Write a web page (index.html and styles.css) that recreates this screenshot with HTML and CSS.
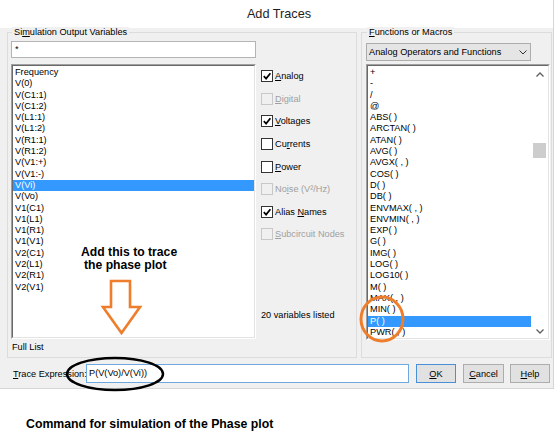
FILE: index.html
```html
<!DOCTYPE html>
<html>
<head>
<meta charset="utf-8">
<title>Add Traces</title>
<link rel="stylesheet" href="styles.css">
</head>
<body>
<div class="page">
  <div class="dialog">
    <div class="titlebar">Add Traces</div>

    <div class="panels">
      <div class="group group-vars">
        <div class="legend">Si<u>m</u>ulation Output Variables</div>
        <div class="group-body vars-body">
          <div class="filter">*</div>
          <div class="vars-row">
            <div class="listbox vars-list">
              <div class="list-inner">
                <div class="item">Frequency</div>
                <div class="item">V(0)</div>
                <div class="item">V(C1:1)</div>
                <div class="item">V(C1:2)</div>
                <div class="item">V(L1:1)</div>
                <div class="item">V(L1:2)</div>
                <div class="item">V(R1:1)</div>
                <div class="item">V(R1:2)</div>
                <div class="item">V(V1:+)</div>
                <div class="item">V(V1:-)</div>
                <div class="item selected">V(Vi)</div>
                <div class="item">V(Vo)</div>
                <div class="item">V1(C1)</div>
                <div class="item">V1(L1)</div>
                <div class="item">V1(R1)</div>
                <div class="item">V1(V1)</div>
                <div class="item">V2(C1)</div>
                <div class="item">V2(L1)</div>
                <div class="item">V2(R1)</div>
                <div class="item">V2(V1)</div>
              </div>
            </div>
            <div class="options">
              <div class="opt"><span class="box"><svg viewBox="0 0 10 10"><path d="M1.8 5.2 L4.1 7.6 L8.4 2.2"/></svg></span><span><u>A</u>nalog</span></div>
              <div class="opt disabled"><span class="box"></span><span><u>D</u>igital</span></div>
              <div class="opt"><span class="box"><svg viewBox="0 0 10 10"><path d="M1.8 5.2 L4.1 7.6 L8.4 2.2"/></svg></span><span><u>V</u>oltages</span></div>
              <div class="opt"><span class="box"></span><span>Cu<u>r</u>rents</span></div>
              <div class="opt"><span class="box"></span><span><u>P</u>ower</span></div>
              <div class="opt disabled"><span class="box"></span><span>No<u>i</u>se (V²/Hz)</span></div>
              <div class="opt"><span class="box"><svg viewBox="0 0 10 10"><path d="M1.8 5.2 L4.1 7.6 L8.4 2.2"/></svg></span><span>Alias <u>N</u>ames</span></div>
              <div class="opt disabled"><span class="box"></span><span><u>S</u>ubcircuit Nodes</span></div>
              <div class="count">20 variables listed</div>
            </div>
          </div>
          <div class="full">Full List</div>
        </div>
      </div>

      <div class="group group-funcs">
        <div class="legend"><u>F</u>unctions or Macros</div>
        <div class="group-body funcs-body">
          <div class="combo">
            <span>Analog Operators and Functions</span>
            <svg class="combo-arrow" viewBox="0 0 8 5"><polyline points="0.5,0.5 4,4 7.5,0.5"/></svg>
          </div>
          <div class="listbox funcs-list">
            <div class="list-inner funcs-inner">
              <div class="funcs-items">
                <div class="item">+</div>
                <div class="item">-</div>
                <div class="item">/</div>
                <div class="item">@</div>
                <div class="item">ABS( )</div>
                <div class="item">ARCTAN( )</div>
                <div class="item">ATAN( )</div>
                <div class="item">AVG( )</div>
                <div class="item">AVGX( , )</div>
                <div class="item">COS( )</div>
                <div class="item">D( )</div>
                <div class="item">DB( )</div>
                <div class="item">ENVMAX( , )</div>
                <div class="item">ENVMIN( , )</div>
                <div class="item">EXP( )</div>
                <div class="item">G( )</div>
                <div class="item">IMG( )</div>
                <div class="item">LOG( )</div>
                <div class="item">LOG10( )</div>
                <div class="item">M( )</div>
                <div class="item">MAX( , )</div>
                <div class="item">MIN( )</div>
                <div class="item selected">P( )</div>
                <div class="item">PWR( , )</div>
              </div>
              <div class="scrollbar">
                <div class="sb-btn sb-up"><svg viewBox="0 0 8 5"><polyline points="0.5,4.5 4,1 7.5,4.5"/></svg></div>
                <div class="sb-track"><div class="sb-thumb"></div></div>
                <div class="sb-btn sb-down"><svg viewBox="0 0 8 5"><polyline points="0.5,0.5 4,4 7.5,0.5"/></svg></div>
              </div>
            </div>
          </div>
        </div>
      </div>
    </div>

    <div class="expr-row">
      <span class="expr-label"><u>T</u>race Expression:</span>
      <div class="expr-input">P(V(Vo)/V(Vi))</div>
      <div class="btn btn-default btn-ok"><u>O</u>K</div>
      <div class="btn btn-cancel"><u>C</u>ancel</div>
      <div class="btn btn-help"><u>H</u>elp</div>
    </div>
  </div>

  <p class="caption">Command for simulation of the Phase plot</p>

  <div class="note">
    <span class="note-line">Add this to trace</span>
    <span class="note-line note-line2">the phase plot</span>
  </div>

  <svg class="marks" viewBox="0 0 560 443" width="560" height="443">
    <polygon class="arrow" points="111,281 130,281 130,307 140,307 121.5,333 103,307 111,307"/>
    <ellipse class="ring-orange" cx="382" cy="319" rx="21" ry="22"/>
    <ellipse class="ring-black" cx="115" cy="374" rx="48" ry="16"/>
  </svg>
</div>
</body>
</html>
```

FILE: styles.css
```css
* {
  box-sizing: border-box;
}

body {
  margin: 0;
  background: #fff;
  font-family: "Liberation Sans", Arial, sans-serif;
  font-size: 9.2px;
  color: #000;
}

u {
  text-decoration: underline;
  text-underline-offset: 1px;
}

.page {
  position: relative;
  width: 560px;
  height: 443px;
  overflow: hidden;
}

/* ---- dialog frame ---- */
.dialog {
  width: 554px;
  height: 389px;
  background: #f0f0f0;
  border-right: 1px solid #d6d6d6;
  border-bottom: 1px solid #d6d6d6;
  display: flex;
  flex-direction: column;
}

.titlebar {
  height: 28px;
  background: #fff;
  display: flex;
  align-items: center;
  justify-content: center;
  padding-left: 5px;
  font-size: 12.7px;
  color: #1e1e1e;
}

.panels {
  display: flex;
  gap: 4px;
  margin-top: 4px;
  padding-left: 7px;
}

.group {
  border: 1px solid #dcdcdc;
  height: 326px;
}

.group-vars {
  width: 350px;
}

.group-funcs {
  width: 191px;
}

.legend {
  width: max-content;
  margin: -6px 0 0 4px;
  padding: 0 2px;
  line-height: 11px;
  background: #f0f0f0;
}

.group-funcs .legend {
  margin-left: 5px;
}

.vars-body {
  padding-left: 3px;
}

.funcs-body {
  padding-left: 4px;
}

/* ---- inputs ---- */
.filter {
  width: 245px;
  height: 17px;
  margin-top: 3px;
  border: 1px solid #b4b4b4;
  background: #fff;
  padding-left: 3px;
  line-height: 14px;
}

.vars-row {
  display: flex;
  gap: 5px;
  margin-top: 6px;
}

.listbox {
  background: #fff;
  border: 1px solid;
  border-color: #a0a0a0 #fff #fff #a0a0a0;
}

.list-inner {
  height: 100%;
  border: 1px solid;
  border-color: #696969 #e3e3e3 #e3e3e3 #696969;
  padding-top: 1px;
  overflow: hidden;
}

.vars-list {
  width: 245px;
  height: 275px;
  flex: none;
}

.item {
  height: 11.3px;
  line-height: 11.3px;
  padding-left: 2px;
  white-space: nowrap;
}

.item.selected {
  background: #3399ff;
  color: #fff;
}

/* ---- option checkboxes ---- */
.options {
  flex: 1;
  display: flex;
  flex-direction: column;
  padding-top: 1px;
}

.opt {
  height: 22.6px;
  display: flex;
  align-items: center;
  gap: 2px;
  white-space: nowrap;
}

.box {
  width: 12px;
  height: 12px;
  border: 1px solid #333;
  background: #fff;
  display: flex;
  align-items: center;
  justify-content: center;
}

.box svg {
  width: 10px;
  height: 10px;
}

.box path {
  fill: none;
  stroke: #000;
  stroke-width: 1.7;
}

.opt.disabled {
  color: #a0a0a0;
}

.opt.disabled .box {
  border-color: #c8c8c8;
  background: #f0f0f0;
}

.count {
  margin-top: auto;
  margin-bottom: 18px;
  line-height: 11px;
}

.full {
  margin: 3px 0 0 1px;
  line-height: 11px;
}

/* ---- functions panel ---- */
.combo {
  width: 165px;
  height: 18px;
  margin-top: 5px;
  border: 1px solid #adadad;
  background: #e5e5e5;
  padding: 0 2px;
  display: flex;
  align-items: center;
  justify-content: space-between;
}

.combo-arrow {
  width: 8px;
  height: 5px;
  margin-right: 1px;
}

.combo-arrow polyline {
  fill: none;
  stroke: #333;
  stroke-width: 1;
}

.funcs-list {
  width: 184px;
  height: 276px;
  margin-top: 3px;
}

.funcs-inner {
  display: flex;
  padding-top: 0;
}

.funcs-items {
  flex: 1;
  padding-top: 1px;
  overflow: hidden;
}

.scrollbar {
  width: 17px;
  display: flex;
  flex-direction: column;
  background: #fff;
}

.sb-btn {
  display: flex;
  align-items: center;
  justify-content: center;
}

.sb-up {
  height: 17px;
}

.sb-down {
  height: 13px;
}

.sb-btn svg {
  width: 8px;
  height: 5px;
}

.sb-btn polyline {
  fill: none;
  stroke: #606060;
  stroke-width: 1.3;
}

.sb-track {
  flex: 1;
  padding: 60px 2px 0;
}

.sb-thumb {
  height: 15px;
  background: #cdcdcd;
}

/* ---- bottom row ---- */
.expr-row {
  display: flex;
  align-items: center;
  margin-top: 6px;
  padding-left: 13px;
  height: 19px;
}

.expr-label {
  width: 73px;
  flex: none;
  white-space: nowrap;
}

.expr-input {
  width: 323px;
  height: 19px;
  border: 1px solid #6fa8dc;
  background: #fff;
  padding-left: 2px;
  line-height: 17px;
}

.btn {
  height: 19px;
  background: #e1e1e1;
  border: 1px solid #adadad;
  display: flex;
  align-items: center;
  justify-content: center;
}

.btn-default {
  border-color: #4a90d9;
}

.btn-ok {
  width: 40px;
  margin-left: 7px;
}

.btn-cancel {
  width: 41px;
  margin-left: 7px;
}

.btn-help {
  width: 40px;
  margin-left: 6px;
}

/* ---- caption below the dialog ---- */
.caption {
  margin: 28px 0 0 26px;
  font-size: 12.3px;
  font-weight: bold;
  line-height: 14px;
}

/* ---- annotations drawn over the dialog ---- */
.note {
  position: absolute;
  left: 81px;
  top: 246px;
  font-size: 12.2px;
  font-weight: bold;
  line-height: 13px;
}

.note-line {
  display: block;
}

.note-line2 {
  padding-left: 3px;
}

.marks {
  position: absolute;
  left: 0;
  top: 0;
  pointer-events: none;
}

.arrow {
  fill: none;
  stroke: #ef7e2c;
  stroke-width: 2.6;
  stroke-linejoin: miter;
}

.ring-orange {
  fill: none;
  stroke: #ef7e2c;
  stroke-width: 3;
}

.ring-black {
  fill: none;
  stroke: #000;
  stroke-width: 2.5;
}
```
